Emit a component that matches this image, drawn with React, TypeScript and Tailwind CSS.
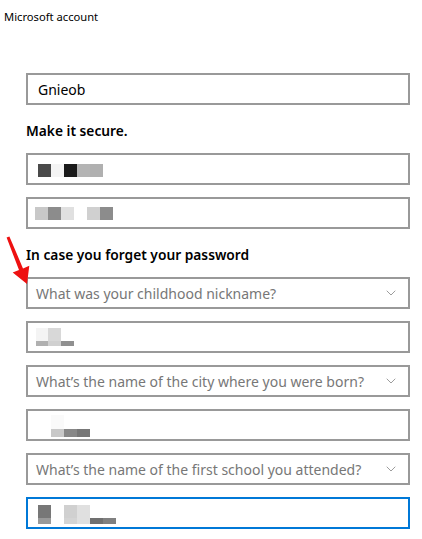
import { ChevronDown } from "lucide-react";

type Px = { x: number; y: number; w: number; h: number; c: string };

// blurred-out values, drawn as pixel blocks relative to the field's outer box
function Blocks({ px }: { px: Px[] }) {
  return (
    <>
      {px.map((p, i) => (
        <span
          key={i}
          className="absolute"
          style={{ left: p.x, top: p.y, width: p.w, height: p.h, background: p.c }}
        />
      ))}
    </>
  );
}

function Field({ px, focused }: { px: Px[]; focused?: boolean }) {
  return (
    <div
      className={`relative h-[32px] w-[384px] border-2 bg-white ${
        focused ? "border-[#0078d7]" : "border-[#999999]"
      }`}
    >
      <Blocks px={px} />
    </div>
  );
}

function Select({ label }: { label: string }) {
  return (
    <div className="flex h-[32px] w-[384px] items-center justify-between border-2 border-[#999999] bg-white pl-[8px] pr-[9px]">
      <span className="whitespace-nowrap text-[14px] text-[#777777]">{label}</span>
      <ChevronDown className="h-[16px] w-[16px] text-[#777777]" strokeWidth={1.1} />
    </div>
  );
}

export default function App() {
  return (
    <div
      className="relative h-[539px] w-[422px] bg-white text-black"
      style={{ fontFamily: '"Noto Sans", "Open Sans", sans-serif' }}
    >
      <div className="pl-[4px] pt-[8px] text-[11.2px] leading-[18px]">Microsoft account</div>

      <div className="flex flex-col pl-[26px] pt-[47px]">
        <div className="flex h-[32px] w-[384px] items-center border-2 border-[#999999] pl-[10px] text-[14px]">
          Gnieob
        </div>

        <h2 className="pt-[16px] pb-[12px] text-[13.75px] font-semibold leading-[20px]">Make it secure.</h2>

        <div className="flex flex-col gap-[12px]">
          <Field
            px={[
              { x: 10, y: 9, w: 13, h: 13, c: "#4a4a4a" },
              { x: 23, y: 9, w: 13, h: 13, c: "#f4f4f4" },
              { x: 36, y: 9, w: 13, h: 13, c: "#1a1a1a" },
              { x: 49, y: 9, w: 13, h: 13, c: "#b4b4b4" },
              { x: 62, y: 9, w: 13, h: 13, c: "#b0b0b0" },
            ]}
          />
          <Field
            px={[
              { x: 7, y: 8, w: 13, h: 13, c: "#c8c8c8" },
              { x: 20, y: 8, w: 13, h: 13, c: "#8c8c8c" },
              { x: 33, y: 8, w: 13, h: 13, c: "#e0e0e0" },
              { x: 59, y: 8, w: 13, h: 13, c: "#d0d0d0" },
              { x: 72, y: 8, w: 13, h: 13, c: "#8c8c8c" },
            ]}
          />
        </div>

        <h2 className="pt-[16px] pb-[12px] text-[13.75px] font-semibold leading-[20px]">
          In case you forget your password
        </h2>

        <div className="flex flex-col gap-[12px]">
          <Select label="What was your childhood nickname?" />
          <Field
            px={[
              { x: 8, y: 5, w: 12, h: 13, c: "#f4f4f4" },
              { x: 20, y: 5, w: 13, h: 13, c: "#d8d8d8" },
              { x: 8, y: 18, w: 12, h: 5, c: "#b0b0b0" },
              { x: 20, y: 18, w: 13, h: 5, c: "#d0d0d0" },
              { x: 33, y: 18, w: 13, h: 5, c: "#909090" },
            ]}
          />
          <Select label="What’s the name of the city where you were born?" />
          <Field
            px={[
              { x: 23, y: 4, w: 13, h: 14, c: "#fafafa" },
              { x: 23, y: 18, w: 13, h: 8, c: "#c8c8c8" },
              { x: 36, y: 18, w: 13, h: 8, c: "#888888" },
              { x: 49, y: 18, w: 13, h: 8, c: "#777777" },
            ]}
          />
          <Select label="What’s the name of the first school you attended?" />
          <Field
            focused
            px={[
              { x: 10, y: 6, w: 13, h: 13, c: "#777777" },
              { x: 10, y: 19, w: 13, h: 6, c: "#999999" },
              { x: 36, y: 6, w: 13, h: 13, c: "#d0d0d0" },
              { x: 49, y: 6, w: 13, h: 13, c: "#e0e0e0" },
              { x: 36, y: 19, w: 13, h: 6, c: "#d4d4d4" },
              { x: 49, y: 19, w: 13, h: 6, c: "#e0e0e0" },
              { x: 62, y: 19, w: 13, h: 6, c: "#707070" },
              { x: 75, y: 19, w: 13, h: 6, c: "#808080" },
            ]}
          />
        </div>
      </div>

      {/* red annotation arrow pointing at the first question */}
      <svg className="absolute left-0 top-[230px]" width="40" height="60" viewBox="0 0 40 60">
        <path
          d="M6.6 7.6 L9.4 6.4 L23 38.4 L29.3 35.8 L27 54 L12.7 42.6 L19 40 Z"
          fill="#ee1111"
        />
      </svg>
    </div>
  );
}
